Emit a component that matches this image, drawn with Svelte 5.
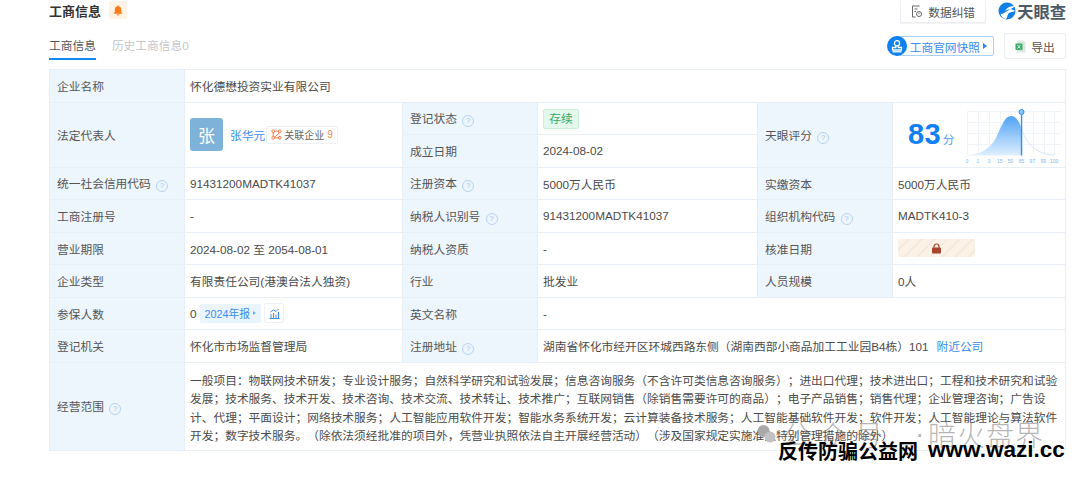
<script>
	const ticks = ["0", "1", "3", "15", "50", "85", "97", "99", "100"];
</script>

<div class="page">
	<div class="head">
		<div class="title">
			<span class="title-text">工商信息</span>
			<span class="bell">
				<svg width="10" height="11" viewBox="0 0 10 11"><path d="M5 0.5c.5 0 .8.3.8.8 1.600.4 2.400 1.700 2.400 3.400v2.200l1 1.300v.5H.8v-.5l1-1.300V4.700c0-1.700.8-3 2.400-3.400 0-.5.3-.8.8-.8z" fill="#ff7a1a"/><path d="M3.700 9.300h2.600c0 .8-.6 1.300-1.300 1.300s-1.300-.5-1.300-1.300z" fill="#ff7a1a"/></svg>
			</span>
		</div>
		<div class="head-right">
			<button class="btn fix">
				<svg width="12" height="13" viewBox="0 0 12 13" fill="none" stroke="#666" stroke-width="1"><path d="M8.500 1H1.500v11h3"/><path d="M3.500 4h3M3.500 6.500h1.500"/><circle cx="8" cy="9" r="2.500"/><path d="M8 7.800v1.400"/></svg>
				数据纠错
			</button>
			<div class="logo">
				<svg width="18" height="18" viewBox="0 0 18 18"><circle cx="9" cy="9" r="8.500" fill="#0f80e8"/><path d="M17 4.500C13 3.500 8.500 5 7 9.500c2-2 5-2.800 7.500-1.800L17.500 9 12 10.500c-1.500.5-2.500 2-2.500 3.500l-1.500 3.500c-3-1-5-3-5.500-6 1 .5 2 .5 2.500 0" fill="#fff"/></svg>
				<span>天眼查</span>
			</div>
		</div>
	</div>

	<div class="tabs">
		<div class="tab-list">
			<span class="tab active">工商信息</span>
			<span class="tab">历史工商信息0</span>
		</div>
		<div class="actions">
			<div class="snapshot">
				<span class="stamp">
					<svg width="14" height="14" viewBox="0 0 14 14" fill="none" stroke="#fff" stroke-width="1.300"><circle cx="7" cy="4.200" r="2.600"/><path d="M5.800 6.800v1.700H2.500v2.500h9V8.500H8.200V6.800"/><path d="M2.500 12.800h9"/></svg>
				</span>
				<span class="snap-text">工商官网快照</span>
				<span class="arrow"></span>
			</div>
			<button class="btn export">
				<svg width="11" height="13" viewBox="0 0 11 13"><path d="M2 .5h6.500l2 2V12.500H2z" fill="#dfe8e2"/><rect x="0.500" y="3.500" width="7" height="6.500" fill="#3dab6a"/><path d="M2.500 5l3 3.500M5.500 5l-3 3.500" stroke="#fff" stroke-width=".8"/></svg>
				导出
			</button>
		</div>
	</div>

	<table>
		<colgroup>
			<col class="c-label" /><col class="c-val1" /><col class="c-label" /><col class="c-val2" /><col class="c-label" /><col />
		</colgroup>
		<tbody>
			<tr class="row">
				<th>企业名称</th>
				<td colspan="5">怀化德懋投资实业有限公司</td>
			</tr>
			<tr class="row">
				<th rowspan="2">法定代表人</th>
				<td rowspan="2">
					<div class="person">
						<span class="avatar">张</span>
						<span class="link">张华元</span>
						<span class="rel">
							<svg width="11" height="11" viewBox="0 0 11 11" fill="none" stroke="#f47a4d" stroke-width="1"><rect x="1" y="1" width="2.500" height="2.500" rx=".6"/><rect x="7.500" y="1" width="2.500" height="2.500" rx=".6"/><rect x="1" y="7.500" width="2.500" height="2.500" rx=".6"/><rect x="7.500" y="7.500" width="2.500" height="2.500" rx=".6"/><path d="M3.500 2.200h4M2.200 3.500v4M8.800 3.500L4 7.800M3.500 8.800h4"/></svg>
							关联企业 <em>9</em>
						</span>
					</div>
				</td>
				<th>登记状态 <i class="q">?</i></th>
				<td><span class="status">存续</span></td>
				<th rowspan="2">天眼评分 <i class="q">?</i></th>
				<td rowspan="2" class="score-cell">
					<div class="score">
						<span class="num">83</span><span class="fen">分</span>
						<svg class="chart" width="96" height="56" viewBox="0 0 96 56">
							<defs>
								<linearGradient id="fill" x1="0" y1="0" x2="0" y2="1">
									<stop offset="0" stop-color="#4ea3f5" />
									<stop offset="1" stop-color="#e0effe" />
								</linearGradient>
							</defs>
							<g stroke="#eef4fa" stroke-width="1">
								<path d="M1 3.500H95M1 14.500H95M1 25.500H95M1 36.500H95" />
								<path d="M1.500 3V47M12.500 3V47M23.500 3V47M34.500 3V47M45.500 3V47M56.500 3V47M67.500 3V47M78.500 3V47M88.500 3V47" />
							</g>
							<path d="M0 47.500C14 46.500 23 42 30 30C36 17 39 8 45 8C50 8 54 14 55 20V47.500Z" fill="url(#fill)" />
							<path d="M55 20C60 34 68 46 88 47" fill="none" stroke="#d5e6f7" stroke-width="1" />
							<path d="M55.500 6V47.500" stroke="#2a90f5" stroke-width="1.300" />
							<circle cx="55.500" cy="4" r="2.500" fill="#8cc5fa" stroke="#2a90f5" stroke-width="1" />
							{#each ticks as t, i}
								<text x={1 + i * 10.9} y="54.500" font-size="5" fill="#7fb5ea" text-anchor="middle">{t}</text>
							{/each}
						</svg>
					</div>
				</td>
			</tr>
			<tr class="row">
				<th>成立日期</th>
				<td>2024-08-02</td>
			</tr>
			<tr class="row">
				<th>统一社会信用代码 <i class="q">?</i></th>
				<td>91431200MADTK41037</td>
				<th>注册资本 <i class="q">?</i></th>
				<td>5000万人民币</td>
				<th>实缴资本</th>
				<td>5000万人民币</td>
			</tr>
			<tr class="row">
				<th>工商注册号</th>
				<td>-</td>
				<th>纳税人识别号 <i class="q">?</i></th>
				<td>91431200MADTK41037</td>
				<th>组织机构代码 <i class="q">?</i></th>
				<td>MADTK410-3</td>
			</tr>
			<tr class="row">
				<th>营业期限</th>
				<td>2024-08-02 至 2054-08-01</td>
				<th>纳税人资质</th>
				<td>-</td>
				<th>核准日期</th>
				<td>
					<span class="locked">
						<svg width="11" height="11" viewBox="0 0 11 11"><path d="M3 5V3.500a2.500 2.500 0 0 1 5 0V5" fill="none" stroke="#a9452a" stroke-width="1.200"/><rect x="1" y="4.500" width="9" height="6" rx="1" fill="#a9452a"/></svg>
					</span>
				</td>
			</tr>
			<tr class="row">
				<th>企业类型</th>
				<td>有限责任公司(港澳台法人独资)</td>
				<th>行业</th>
				<td>批发业</td>
				<th>人员规模</th>
				<td>0人</td>
			</tr>
			<tr class="row">
				<th>参保人数</th>
				<td>
					<div class="insured">
						0
						<span class="report">2024年报<span class="mini"></span></span>
						<span class="trend">
							<svg width="11" height="11" viewBox="0 0 11 11" fill="none" stroke="#3d8ff0" stroke-width="1"><path d="M.5 10.500h10M2 10V6M4.500 10V5M7 10V6.500M9.500 10V4"/><path d="M1.500 4L4.500 2l2.500 1.500L9.500 1"/></svg>
						</span>
					</div>
				</td>
				<th>英文名称</th>
				<td colspan="3">-</td>
			</tr>
			<tr class="row">
				<th>登记机关</th>
				<td>怀化市市场监督管理局</td>
				<th>注册地址 <i class="q">?</i></th>
				<td colspan="3">湖南省怀化市经开区环城西路东侧（湖南西部小商品加工工业园B4栋）101<span class="link near">附近公司</span></td>
			</tr>
			<tr>
				<th>经营范围 <i class="q">?</i></th>
				<td colspan="5" class="scope">一般项目：物联网技术研发；专业设计服务；自然科学研究和试验发展；信息咨询服务（不含许可类信息咨询服务）；进出口代理；技术进出口；工程和技术研究和试验发展；技术服务、技术开发、技术咨询、技术交流、技术转让、技术推广；互联网销售（除销售需要许可的商品）；电子产品销售；销售代理；企业管理咨询；广告设计、代理；平面设计；网络技术服务；人工智能应用软件开发；智能水务系统开发；云计算装备技术服务；人工智能基础软件开发；软件开发；人工智能理论与算法软件开发；数字技术服务。（除依法须经批准的项目外，凭营业执照依法自主开展经营活动）（涉及国家规定实施准入特别管理措施的除外）</td>
			</tr>
		</tbody>
	</table>

	<div class="wm-grey">
		<svg width="19" height="20" viewBox="0 0 19 20"><circle cx="6.500" cy="7" r="6" fill="#a9a9a9"/><circle cx="13" cy="13" r="5.500" fill="#c2c2c2"/></svg>
		<span class="wm-a">公众号</span><span class="wm-dot">·</span><span class="wm-b">暗火盘界</span>
	</div>
	<div class="wm-black"><span class="wm-cn">反传防骗公益网</span><span class="wm-en">www.wazi.cc</span></div>
</div>

<style>
	:global(body) {
		margin: 0;
		background: #fff;
	}
	.page {
		position: relative;
		width: 1080px;
		height: 478px;
		overflow: hidden;
		box-sizing: border-box;
		padding: 0 14px 0 49px;
		font-family: "Liberation Sans", "Noto Sans CJK SC", sans-serif;
		font-size: 11.73px;
		color: #4b4b4b;
		text-spacing-trim: space-all;
	}
	.head {
		display: flex;
		justify-content: space-between;
		height: 23px;
	}
	.title {
		display: flex;
		align-items: center;
		gap: 8px;
		height: 20px;
	}
	.title-text {
		font-size: 13px;
		font-weight: 700;
		color: #333;
	}
	.bell {
		width: 18px;
		height: 18px;
		border-radius: 2px;
		background: #fff3e6;
		display: flex;
		align-items: center;
		justify-content: center;
	}
	.head-right {
		display: flex;
		align-items: flex-start;
		gap: 12px;
	}
	.btn {
		display: flex;
		align-items: center;
		justify-content: center;
		gap: 5px;
		border: 1px solid #eceef2;
		border-radius: 2px;
		background: #fff;
		padding: 0;
		color: #555;
		font: inherit;
	}
	.fix {
		width: 86px;
		height: 23px;
		border-top: none;
		box-shadow: 0 1px 1px #f2f3f5;
	}
	.logo {
		display: flex;
		align-items: center;
		gap: 1px;
		height: 22px;
		font-size: 16.300px;
		font-weight: 700;
		color: #4d5a68;
	}
	.tabs {
		display: flex;
		justify-content: space-between;
		margin-top: 10px;
		height: 36px;
	}
	.tab-list {
		display: flex;
		gap: 16px;
	}
	.tab {
		height: 26px;
		padding-top: 3px;
		box-sizing: border-box;
		color: #c4c7cc;
	}
	.tab.active {
		color: #555;
		height: 27px;
		border-bottom: 2px solid #0f8af5;
	}
	.actions {
		display: flex;
		align-items: flex-start;
		gap: 10px;
	}
	.snapshot {
		display: flex;
		align-items: center;
		height: 18px;
		margin-top: 3px;
		border: 1px solid #a9d2fb;
		border-radius: 2px;
		padding-right: 6px;
		margin-left: 10px;
	}
	.stamp {
		width: 20px;
		height: 20px;
		border-radius: 50%;
		background: #0f80f0;
		display: flex;
		align-items: center;
		justify-content: center;
		margin-left: -9px;
		margin-right: 3px;
	}
	.snap-text {
		color: #3a8cf0;
	}
	.arrow {
		width: 0;
		height: 0;
		margin-left: 3px;
		border: 3px solid transparent;
		border-left: 4px solid #2a86ee;
		border-right: none;
	}
	.export {
		width: 62px;
		height: 26px;
	}
	table {
		width: 1017px;
		border-collapse: collapse;
		table-layout: fixed;
		border: 1px solid #e9eff6;
	}
	.c-label {
		width: 135px;
	}
	.c-val1 {
		width: 218px;
	}
	.c-val2 {
		width: 220px;
	}
	th,
	td {
		border: 1px solid #e9eff6;
		padding: 0 5px;
		font-weight: 400;
		text-align: left;
		white-space: nowrap;
		box-sizing: border-box;
	}
	th {
		background: #edf5fd;
		padding-left: 7px;
		color: #555;
	}
	.row {
		height: 32.500px;
	}
	.q {
		display: inline-block;
		width: 10px;
		height: 10px;
		margin-left: 2px;
		border: 1px solid #b9d3ee;
		border-radius: 50%;
		color: #a9c8e8;
		font-size: 8px;
		line-height: 10px;
		text-align: center;
		font-style: normal;
		vertical-align: 0;
	}
	.person {
		display: flex;
		align-items: center;
	}
	.avatar {
		width: 33px;
		height: 33px;
		border-radius: 3px;
		background: #7fb2d9;
		color: #fff;
		font-size: 17px;
		display: flex;
		align-items: center;
		justify-content: center;
		margin-right: 7px;
	}
	.link {
		color: #3a8cf0;
	}
	.rel {
		display: inline-flex;
		align-items: center;
		gap: 2px;
		height: 18px;
		margin-left: 1px;
		padding: 0 4px;
		border: 1px solid #eef0f3;
		border-radius: 2px;
		font-size: 10px;
		color: #666;
		box-sizing: border-box;
	}
	.rel em {
		font-style: normal;
		color: #f58a45;
		margin-left: 1px;
	}
	.status {
		display: inline-block;
		width: 34px;
		height: 18px;
		line-height: 18px;
		text-align: center;
		border-radius: 2px;
		border: 1px solid #cdf0d8;
		background: #e5f8ec;
		color: #35a866;
		margin-top: 1px;
	}
	.score-cell {
		padding: 0;
	}
	.score {
		display: flex;
		align-items: center;
		height: 64px;
	}
	.num {
		margin-left: 15px;
		font-size: 29px;
		font-weight: 700;
		color: #0f80f5;
		letter-spacing: 0.3px;
	}
	.fen {
		margin: 8px 0 0 2px;
		color: #4d9cf0;
	}
	.chart {
		margin-left: 11px;
		margin-top: 2px;
	}
	.locked {
		display: flex;
		align-items: center;
		justify-content: center;
		width: 77px;
		height: 18px;
		border-radius: 2px;
		background: repeating-linear-gradient(135deg, #fbf1e7 0 7px, #f7e9dc 7px 9px);
	}
	.insured {
		display: flex;
		align-items: center;
	}
	.report {
		display: inline-flex;
		align-items: center;
		height: 19px;
		margin-left: 3px;
		padding: 0 5px;
		border-radius: 2px;
		background: #e9f4fe;
		color: #3a8cf0;
		font-size: 10.800px;
	}
	.mini {
		width: 0;
		height: 0;
		margin-left: 3px;
		border: 2.500px solid transparent;
		border-left: 3px solid #6fb0f2;
		border-right: none;
	}
	.trend {
		width: 18px;
		height: 18px;
		margin-left: 3px;
		border: 1px solid #edf0f4;
		border-radius: 2px;
		display: flex;
		align-items: center;
		justify-content: center;
	}
	.near {
		margin-left: 8px;
	}
	.scope {
		white-space: normal;
		line-height: 18.500px;
		padding: 9px 5px 4px;
		word-break: break-all;
	}
	.wm-grey {
		position: absolute;
		left: 757px;
		top: 414px;
		display: flex;
		align-items: center;
		color: rgba(110, 110, 110, 0.5);
		font-weight: 300;
	}
	.wm-a {
		margin-left: 7px;
		font-size: 28px;
		letter-spacing: 8px;
		width: 132px;
		white-space: nowrap;
	}
	.wm-dot {
		font-size: 28px;
		width: 13px;
	}
	.wm-b {
		font-size: 28px;
		letter-spacing: 1px;
		white-space: nowrap;
	}
	.wm-black {
		position: absolute;
		left: 778px;
		top: 437px;
		display: flex;
		align-items: center;
		gap: 10px;
		height: 26px;
		font-weight: 700;
		color: #000;
		white-space: nowrap;
	}
	.wm-cn {
		font-size: 20px;
	}
	.wm-en {
		font-size: 22.500px;
	}
</style>
